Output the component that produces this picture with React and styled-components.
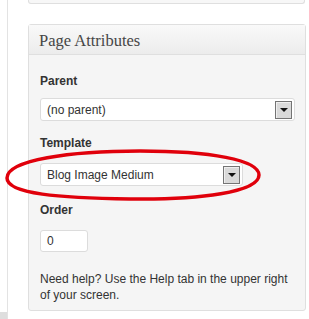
import React from 'react';
import styled, { createGlobalStyle } from 'styled-components';

const GlobalStyle = createGlobalStyle`
  html, body {
    margin: 0;
    padding: 0;
    background: #fff;
  }
  body {
    font-family: "Liberation Sans", Arial, sans-serif;
    font-size: 12px;
    color: #333;
  }
`;

const Page = styled.div`
  display: flex;
  width: 309px;
  height: 319px;
  overflow: hidden;
  position: relative;
`;

const Gutter = styled.div`
  width: 7px;
  flex: none;
  border-right: 1px solid #e3e3e3;
  display: flex;
  flex-direction: column;
  justify-content: flex-end;
`;

const GutterFoot = styled.div`
  height: 7px;
  background: #dedede;
`;

const Main = styled.div`
  flex: 1;
  padding: 0 3px 0 20px;
  display: flex;
  flex-direction: column;
`;

const PrevBox = styled.div`
  height: 3px;
  border: 1px solid #dfdfdf;
  border-top: 0;
  border-radius: 0 0 3px 3px;
  background: #f7f7f7;
  margin-right: 1px;
`;

const Panel = styled.div`
  margin-top: 20px;
  border: 1px solid #dfdfdf;
  border-radius: 3px;
  background: #f5f5f5;
`;

const PanelHead = styled.div`
  height: 29px;
  border-bottom: 1px solid #dfdfdf;
  background: linear-gradient(to bottom, #f9f9f9, #ececec);
  padding-left: 10px;
  display: flex;
  align-items: center;
`;

const Title = styled.h3`
  margin: 0;
  font-family: "Liberation Serif", "Times New Roman", serif;
  font-weight: normal;
  font-size: 16.5px;
  color: #464646;
  position: relative;
  top: 1px;
`;

const PanelBody = styled.div`
  padding: 19px 10px 7px 11px;
  display: flex;
  flex-direction: column;
`;

const Label = styled.div`
  font-weight: bold;
  font-size: 12px;
  line-height: 14px;
  color: #333;
  margin-top: ${({ $gap }) => $gap || 0}px;
`;

const Select = styled.div`
  box-sizing: border-box;
  width: ${({ $width }) => $width || '100%'};
  height: 23px;
  margin-top: ${({ $gap }) => $gap}px;
  background: #fff;
  border: 1px solid #dcdcdc;
  border-radius: 3px;
  display: flex;
  align-items: center;
  justify-content: space-between;
  padding: 0 2px 0 6px;
  font-size: 12px;
  color: #333;
`;

const ArrowButton = styled.span`
  box-sizing: border-box;
  width: 17px;
  height: 18px;
  border: 1px solid #747474;
  background: #d9d9d9;
  box-shadow: inset 1px 1px 0 #efefef;
  display: flex;
  align-items: center;
  justify-content: center;
`;

const Arrow = styled.span`
  width: 0;
  height: 0;
  border-left: 4px solid transparent;
  border-right: 4px solid transparent;
  border-top: 4px solid #111;
  margin-top: 1px;
`;

const NumberBox = styled.div`
  box-sizing: border-box;
  width: 48px;
  height: 22px;
  margin-top: 13px;
  background: #fff;
  border: 1px solid #dcdcdc;
  border-radius: 3px;
  padding-left: 6px;
  display: flex;
  align-items: center;
  font-size: 12px;
  color: #333;
`;

const Help = styled.p`
  margin: 19px 0 0;
  font-size: 12px;
  line-height: 16px;
  color: #333;
`;

const Annotation = styled.svg`
  position: absolute;
  left: 0;
  top: 0;
  pointer-events: none;
`;

function Dropdown({ value, width, gap }) {
  return (
    <Select $width={width} $gap={gap}>
      <span>{value}</span>
      <ArrowButton>
        <Arrow />
      </ArrowButton>
    </Select>
  );
}

export default function App() {
  return (
    <>
      <GlobalStyle />
      <Page>
        <Gutter>
          <GutterFoot />
        </Gutter>
        <Main>
          <PrevBox />
          <Panel>
            <PanelHead>
              <Title>Page Attributes</Title>
            </PanelHead>
            <PanelBody>
              <Label>Parent</Label>
              <Dropdown value="(no parent)" gap={10} />
              <Label $gap={15}>Template</Label>
              <Dropdown value="Blog Image Medium" width="203px" gap={13} />
              <Label $gap={17}>Order</Label>
              <NumberBox>0</NumberBox>
              <Help>
                Need help? Use the Help tab in the upper right of your screen.
              </Help>
            </PanelBody>
          </Panel>
        </Main>
        <Annotation width="309" height="319" viewBox="0 0 309 319">
          <path
            d="M 7 178 C 7 160 70 151 140 151 C 210 151 259 160 259 175 C 259 192 200 200 130 199 C 60 198 7 194 7 178 Z"
            fill="none"
            stroke="#e0000b"
            strokeWidth="3.5"
          />
        </Annotation>
      </Page>
    </>
  );
}
